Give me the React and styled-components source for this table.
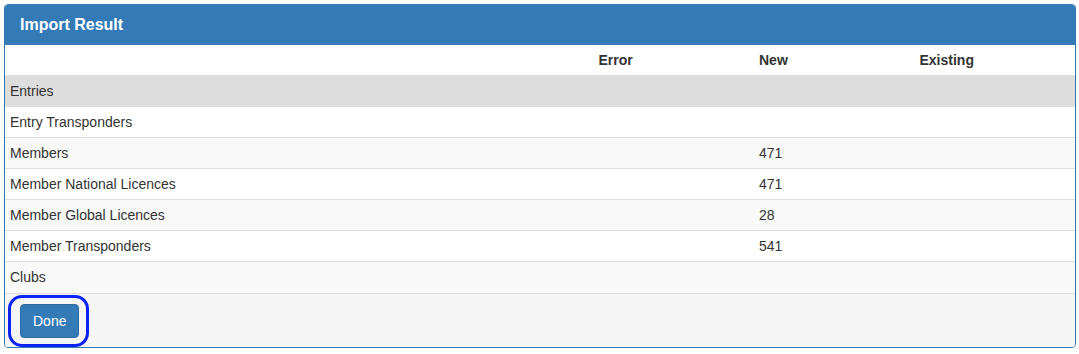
import React from 'react'
import styled, { createGlobalStyle } from 'styled-components'

const GlobalStyle = createGlobalStyle`
  body {
    margin: 0;
    padding: 4px 3px 0 4px;
    background: #fff;
    font-family: "Liberation Sans", Arial, Helvetica, sans-serif;
    font-size: 14px;
    line-height: 20px;
    color: #333;
  }
  * { box-sizing: border-box; }
`

const rows = [
  { name: 'Entries', error: '', created: '', existing: '', active: true },
  { name: 'Entry Transponders', error: '', created: '', existing: '' },
  { name: 'Members', error: '', created: '471', existing: '' },
  { name: 'Member National Licences', error: '', created: '471', existing: '' },
  { name: 'Member Global Licences', error: '', created: '28', existing: '' },
  { name: 'Member Transponders', error: '', created: '541', existing: '' },
  { name: 'Clubs', error: '', created: '', existing: '' },
]

const App = () => {
  return (
    <>
      <GlobalStyle />
      <Panel>
        <Heading>
          <Title>Import Result</Title>
        </Heading>
        <Table>
          <thead>
            <tr>
              <Th></Th>
              <Th $narrow>Error</Th>
              <Th $narrow>New</Th>
              <Th $narrow>Existing</Th>
            </tr>
          </thead>
          <tbody>
            {rows.map((r, i) => (
              <Row key={r.name} $active={r.active} $striped={i % 2 === 0}>
                <Td>{r.name}</Td>
                <Td>{r.error}</Td>
                <Td>{r.created}</Td>
                <Td>{r.existing}</Td>
              </Row>
            ))}
          </tbody>
        </Table>
        <Footer>
          <Button type="button">Done</Button>
        </Footer>
      </Panel>
    </>
  )
}

const Panel = styled.div`
  width: 1072px;
  border: 1px solid #337ab7;
  border-radius: 4px;
  background: #fff;
  overflow: hidden;
`

const Heading = styled.div`
  background: #337ab7;
  color: #fff;
  padding: 10px 15px;
  border-bottom: 1px solid #337ab7;
`

const Title = styled.h3`
  margin: 0;
  font-size: 16px;
  line-height: 19px;
  font-weight: bold;
`

const Table = styled.table`
  width: 100%;
  border-collapse: collapse;
  border-spacing: 0;
`

const Th = styled.th`
  text-align: left;
  font-weight: bold;
  padding: 5px;
  line-height: 20px;
  width: ${({ $narrow }) => ($narrow ? '15%' : 'auto')};
  border-bottom: 1px solid #ddd;
`

const Row = styled.tr`
  background: ${({ $active, $striped }) =>
    $active ? '#ddd' : $striped ? '#f9f9f9' : '#fff'};
`

const Td = styled.td`
  padding: 5px;
  line-height: 20px;
  height: 31px;
  border-top: 1px solid #ddd;
`

const Footer = styled.div`
  background: #f5f5f5;
  border-top: 1px solid #ddd;
  padding: 10px 15px 9px;
`

const Button = styled.button`
  position: relative;
  display: inline-block;
  font-family: inherit;
  font-size: 14px;
  line-height: 20px;
  padding: 6px 12px;
  color: #fff;
  background: #337ab7;
  border: 1px solid #2e6da4;
  border-radius: 4px;
  outline: none;
  cursor: pointer;

  /* focus ring */
  &::after {
    content: "";
    position: absolute;
    top: -10px;
    bottom: -10px;
    left: -13px;
    right: -11px;
    border: 3px solid #0b22f6;
    border-radius: 14px;
    pointer-events: none;
  }
`

export default App
